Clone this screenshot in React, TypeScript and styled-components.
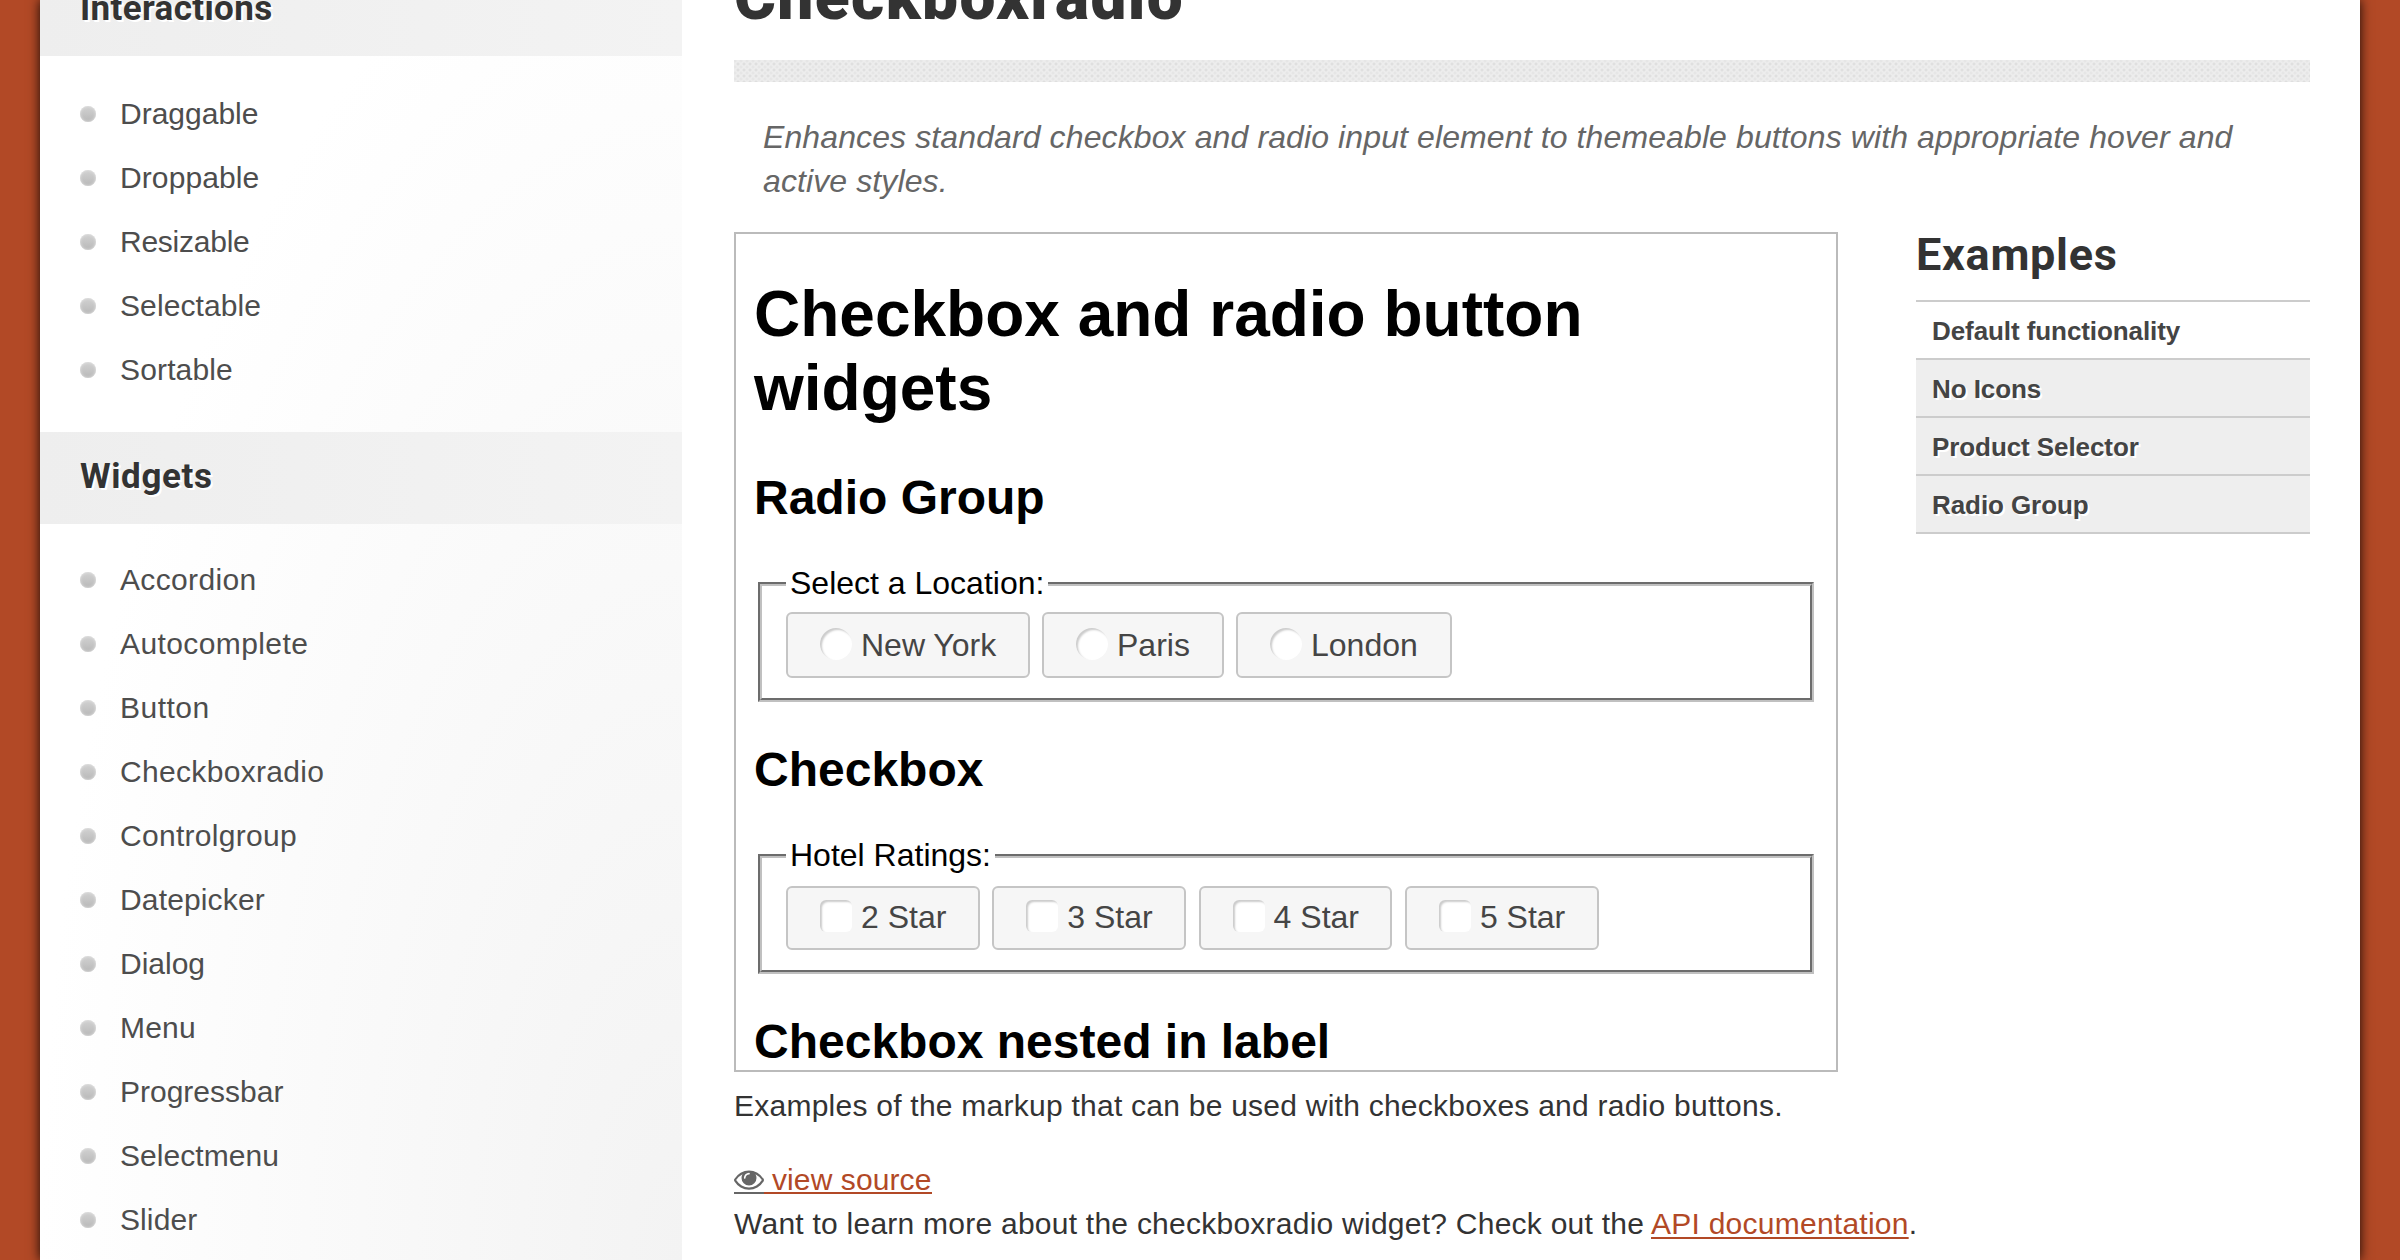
import React from "react";
import styled, { createGlobalStyle } from "styled-components";

const helvetica = `"Liberation Sans", Arial, sans-serif`;
const display = `Roboto, "Open Sans", sans-serif`;

const GlobalStyle = createGlobalStyle`
  * { box-sizing: border-box; }
  body { margin: 0; background: #b24926; overflow: hidden; }
`;

const Viewport = styled.div`
  height: 1260px;
  padding: 0 40px;
  overflow: hidden;
  background: #b24926;
`;

const Page = styled.div`
  display: flex;
  height: 1260px;
  background: #fff;
  box-shadow: 0 0 11px rgba(0, 0, 0, 0.9);
  font-family: ${helvetica};
`;

const Sidebar = styled.aside`
  width: 642px;
  height: 1260px;
  overflow: hidden;
  background: radial-gradient(ellipse 100% 110% at 100% 100%, #f3f3f3, #fff);
`;

const Band = styled.h3<{ $cut?: boolean }>`
  margin: ${(p) => (p.$cut ? "-36px 0 0" : "0")};
  height: 92px;
  padding: 0 0 0 40px;
  background: linear-gradient(90deg, #eee, #f3f3f3);
  font: 700 35px/90px ${display};
  letter-spacing: ${(p) => (p.$cut ? "0.35px" : "0.6px")};
  color: #333;
  text-shadow: 2px 2px 0 #fff;
`;

const NavList = styled.ul<{ $top: number }>`
  list-style: none;
  margin: 0;
  padding: ${(p) => p.$top}px 0 30px 40px;
`;

const NavItem = styled.li<{ $tracking: number }>`
  display: flex;
  align-items: center;
  height: 64px;
  gap: 24px;
  font-size: 30px;
  line-height: 64px;
  letter-spacing: ${(p) => p.$tracking}px;
  color: #4d4d4d;
`;

const Bullet = styled.span`
  width: 16px;
  height: 16px;
  border-radius: 50%;
  background: linear-gradient(#d2d2d2, #b8b8b8);
  box-shadow: inset 0 0 3px #e8e8e8;
`;

const Main = styled.main`
  width: 1576px;
  margin-left: 52px;
`;

const Title = styled.h1`
  margin: -44px 0 40px;
  height: 64px;
  font: 900 64px/84px ${display};
  letter-spacing: 1.35px;
  color: #333;
`;

const Rule = styled.div`
  height: 22px;
  background-color: #ededed;
  background-image: radial-gradient(circle, #dedede 0.6px, transparent 2.1px),
    radial-gradient(circle, #e5e5e5 0.6px, transparent 2.1px);
  background-size: 6px 6px;
  background-position: 1px 1px, 4px 4px;
`;

const Description = styled.p`
  margin: 33px 0 29px;
  padding-left: 29px;
  font-size: 32px;
  font-style: italic;
  line-height: 44px;
  letter-spacing: 0.11px;
  color: #666;
  white-space: nowrap;
`;

const Columns = styled.div`
  display: flex;
  justify-content: space-between;
`;

const Frame = styled.section`
  width: 1104px;
  height: 840px;
  border: 2px solid #bbb;
  padding: 0 22px 0 18px;
  overflow: hidden;
  color: #000;
`;

const DemoTitle = styled.h1`
  margin: 43px 0 0;
  font-size: 64px;
  line-height: 74px;
`;

const DemoHeading = styled.h2<{ $top: number }>`
  margin: ${(p) => p.$top}px 0 0;
  font-size: 48px;
  line-height: 56px;
`;

const Group = styled.fieldset`
  height: 136px;
  margin: 40px 0 0 4px;
  width: 1056px;
  padding: 0 24px;
  border: 4px groove #c0c0c0;
  font-size: 32px;
`;

const Legend = styled.legend`
  height: 36px;
  padding: 0 4px;
  line-height: 34px;
`;

const Buttons = styled.div<{ $top: number; $gap: number }>`
  display: flex;
  gap: ${(p) => p.$gap}px;
  margin-top: ${(p) => p.$top}px;
`;

const Choice = styled.label<{ $w: number; $h: number }>`
  display: flex;
  align-items: center;
  flex: none;
  gap: 9px;
  width: ${(p) => p.$w}px;
  height: ${(p) => p.$h}px;
  padding: 0 0 ${(p) => (p.$h === 64 ? 2 : 0)}px 32px;
  border: 2px solid #c5c5c5;
  border-radius: 6px;
  background: #f6f6f6;
  color: #454545;
  line-height: 36px;
  white-space: nowrap;
`;

const Mark = styled.span<{ $round?: boolean }>`
  width: 32px;
  height: 32px;
  flex: none;
  margin-top: -2px;
  border-radius: ${(p) => (p.$round ? "50%" : "6px")};
  background: #fff;
  box-shadow: inset 2px 2px 2px #ccc;
`;

const Examples = styled.aside`
  width: 394px;
`;

const ExamplesTitle = styled.h2`
  margin: -3px 0 0;
  height: 71px;
  font: 700 45px/52px ${display};
  color: #333;
  letter-spacing: 0.7px;
`;

const ExampleList = styled.ul`
  list-style: none;
  margin: 0;
  padding: 0;
  border-top: 2px solid #ccc;
`;

const ExampleItem = styled.li<{ $active?: boolean }>`
  height: 58px;
  padding-left: 16px;
  border-bottom: 2px solid #ccc;
  background: ${(p) => (p.$active ? "#fff" : "#eee")};
  font-size: 26px;
  font-weight: 700;
  line-height: 58px;
  letter-spacing: -0.08px;
  color: #444;
  text-shadow: 2px 2px 0 #fff;
`;

const Text = styled.p<{ $top?: number }>`
  margin: ${(p) => p.$top || 0}px 0 0;
  font-size: 30px;
  line-height: 44px;
  letter-spacing: 0.245px;
  color: #333;
  white-space: nowrap;
`;

const Link = styled.a`
  color: #b24926;
  text-decoration: underline;
  text-decoration-thickness: 2px;
  text-underline-offset: 3px;
`;

const SourceRow = styled.div`
  display: flex;
  align-items: flex-end;
  height: 44px;
  margin-top: 30px;
  padding-bottom: 8px;
`;

const SourceLink = styled.a`
  display: flex;
  font-size: 30px;
  letter-spacing: 0.1px;
  color: #b24926;
`;

const EyeBox = styled.span`
  display: flex;
  height: 30px;
  border-bottom: 2px solid #666;
`;

const SourceText = styled.span`
  height: 30px;
  padding-left: 8px;
  border-bottom: 2px solid #b24926;
  line-height: 31px;
`;

const EyeIcon = () => (
  <svg width="30" height="30" viewBox="0 0 1792 1792" fill="#666">
    <path d="M1664 960q-152-236-381-353 61 104 61 225 0 185-131.5 316.5t-316.5 131.5-316.5-131.5-131.5-316.5q0-121 61-225-229 117-381 353 133 205 333.5 326.5t434.5 121.5 434.5-121.5 333.5-326.5zm-720-384q0-20-14-34t-34-14q-125 0-214.5 89.5t-89.5 214.5q0 20 14 34t34 14 34-14 14-34q0-86 61-147t147-61q20 0 34-14t14-34zm848 384q0 34-20 69-140 230-376.5 368.5t-499.5 138.5-499.5-139-376.5-368q-20-35-20-69t20-69q140-229 376.5-368t499.5-139 499.5 139 376.5 368q20 35 20 69z" />
  </svg>
);

type Entry = { name: string; tracking?: number };

const interactions: Entry[] = [
  { name: "Draggable" },
  { name: "Droppable", tracking: 0.1 },
  { name: "Resizable", tracking: -0.25 },
  { name: "Selectable", tracking: 0.1 },
  { name: "Sortable", tracking: 0.15 },
];
const widgets: Entry[] = [
  { name: "Accordion", tracking: 0.35 },
  { name: "Autocomplete", tracking: 0.4 },
  { name: "Button", tracking: 0.5 },
  { name: "Checkboxradio", tracking: 0.32 },
  { name: "Controlgroup", tracking: 0.3 },
  { name: "Datepicker", tracking: 0.15 },
  { name: "Dialog" },
  { name: "Menu", tracking: 0.2 },
  { name: "Progressbar" },
  { name: "Selectmenu", tracking: 0.05 },
  { name: "Slider", tracking: 0.1 },
];
const cities = [
  { name: "New York", width: 244 },
  { name: "Paris", width: 182 },
  { name: "London", width: 216 },
];
const ratings = ["2 Star", "3 Star", "4 Star", "5 Star"];
const examples = ["Default functionality", "No Icons", "Product Selector", "Radio Group"];

const Nav = ({ items, top }: { items: Entry[]; top: number }) => (
  <NavList $top={top}>
    {items.map((item) => (
      <NavItem key={item.name} $tracking={item.tracking ?? 0}>
        <Bullet />
        {item.name}
      </NavItem>
    ))}
  </NavList>
);

export default function App() {
  return (
    <>
      <GlobalStyle />
      <Viewport>
        <Page>
          <Sidebar>
            <Band $cut>Interactions</Band>
            <Nav items={interactions} top={26} />
            <Band>Widgets</Band>
            <Nav items={widgets} top={24} />
          </Sidebar>
          <Main>
            <Title>Checkboxradio</Title>
            <Rule />
            <Description>
              Enhances standard checkbox and radio input element to themeable buttons with appropriate hover and
              <br />
              active styles.
            </Description>
            <Columns>
              <Frame>
                <DemoTitle>
                  Checkbox and radio button
                  <br />
                  widgets
                </DemoTitle>
                <DemoHeading $top={45}>Radio Group</DemoHeading>
                <Group>
                  <Legend>Select a Location:</Legend>
                  <Buttons $top={10} $gap={12}>
                    {cities.map((c) => (
                      <Choice key={c.name} $w={c.width} $h={66}>
                        <Mark $round />
                        {c.name}
                      </Choice>
                    ))}
                  </Buttons>
                </Group>
                <DemoHeading $top={40}>Checkbox</DemoHeading>
                <Group>
                  <Legend>Hotel Ratings:</Legend>
                  <Buttons $top={12} $gap={12.5}>
                    {ratings.map((r) => (
                      <Choice key={r} $w={193.8} $h={64}>
                        <Mark />
                        {r}
                      </Choice>
                    ))}
                  </Buttons>
                </Group>
                <DemoHeading $top={40}>Checkbox nested in label</DemoHeading>
              </Frame>
              <Examples>
                <ExamplesTitle>Examples</ExamplesTitle>
                <ExampleList>
                  {examples.map((e, i) => (
                    <ExampleItem key={e} $active={i === 0}>
                      {e}
                    </ExampleItem>
                  ))}
                </ExampleList>
              </Examples>
            </Columns>
            <Text $top={12}>Examples of the markup that can be used with checkboxes and radio buttons.</Text>
            <SourceRow>
              <SourceLink>
                <EyeBox>
                  <EyeIcon />
                </EyeBox>
                <SourceText>view source</SourceText>
              </SourceLink>
            </SourceRow>
            <Text>
              Want to learn more about the checkboxradio widget? Check out the <Link>API documentation</Link>.
            </Text>
          </Main>
        </Page>
      </Viewport>
    </>
  );
}
